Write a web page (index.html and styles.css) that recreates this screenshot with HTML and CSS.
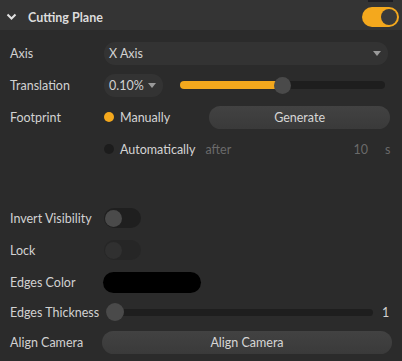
FILE: index.html
```html
<!DOCTYPE html>
<html lang="en">
  <head>
    <meta charset="UTF-8" />
    <meta name="viewport" content="width=device-width, initial-scale=1.0" />
    <title>Cutting Plane</title>
    <link rel="stylesheet" href="styles.css">
  </head>
  <body>
    <div class="panel">
      <div class="panel-header">
        <svg class="chevron" width="11" height="8" viewBox="0 0 11 8">
          <polyline points="1.5,1.5 5.5,5.5 9.5,1.5" fill="none" stroke="#e2e2e2" stroke-width="2" />
        </svg>
        <span class="panel-title">Cutting Plane</span>
        <span class="toggle toggle-on"><span class="knob"></span></span>
      </div>

      <div class="panel-body">
        <div class="row">
          <span class="label">Axis</span>
          <div class="select select-wide">
            <span>X Axis</span>
            <span class="caret"></span>
          </div>
        </div>

        <div class="row">
          <span class="label">Translation</span>
          <div class="select select-small">
            <span>0.10%</span>
            <span class="caret"></span>
          </div>
          <div class="slider slider-translation">
            <div class="fill" style="width: 50%"></div>
            <span class="thumb"></span>
          </div>
        </div>

        <div class="row">
          <span class="label">Footprint</span>
          <span class="radio radio-on"></span>
          <span class="radio-text">Manually</span>
          <button class="btn btn-generate">Generate</button>
        </div>

        <div class="row">
          <span class="label"></span>
          <span class="radio"></span>
          <span class="radio-text">Automatically</span>
          <span class="muted after">after</span>
          <span class="muted seconds">10</span>
          <span class="muted unit">s</span>
        </div>

        <div class="spacer"></div>

        <div class="row">
          <span class="label">Invert Visibility</span>
          <span class="toggle"><span class="knob"></span></span>
        </div>

        <div class="row">
          <span class="label">Lock</span>
          <span class="toggle toggle-disabled"><span class="knob"></span></span>
        </div>

        <div class="row">
          <span class="label">Edges Color</span>
          <span class="swatch"></span>
        </div>

        <div class="row row-short">
          <span class="label">Edges Thickness</span>
          <div class="slider slider-thickness">
            <span class="thumb"></span>
          </div>
          <span class="value">1</span>
        </div>

        <div class="row">
          <span class="label">Align Camera</span>
          <button class="btn btn-align">Align Camera</button>
        </div>
      </div>
    </div>
  </body>
</html>
```

FILE: styles.css
```css
body {
  margin: 0;
  background-color: #2b2b2b;
  font-family: Lato, "Open Sans", sans-serif;
  font-size: 12.5px;
  color: #d2d2d2;
}

.panel {
  width: 402px;
  height: 361px;
  overflow: hidden;
}

.panel-header {
  position: relative;
  display: flex;
  align-items: center;
  height: 30px;
  padding: 4px 3px 0 6px;
  box-sizing: border-box;
  background-color: #343434;
}

/* bit of the panel above peeking in */
.panel-header::before {
  content: '';
  position: absolute;
  top: 0;
  right: 9px;
  width: 25px;
  height: 2px;
  background-color: #1d1d22;
}

.chevron {
  margin-right: 11px;
}

.panel-title {
  flex: 1;
  font-weight: 700;
  font-size: 12.5px;
  color: #dcdcdc;
}

.panel-body {
  padding: 7px 12px 0 10px;
}

.row {
  display: flex;
  align-items: center;
  height: 32px;
}

.row-short {
  height: 28px;
}

.label {
  width: 94px;
  flex-shrink: 0;
}

.select {
  display: flex;
  align-items: center;
  justify-content: space-between;
  height: 23px;
  padding: 0 7px 0 5px;
  box-sizing: border-box;
  border-radius: 11px;
  background-color: #333333;
}

.select-wide {
  flex: 1;
  margin-right: 2px;
}

.select-small {
  width: 59px;
}

.caret {
  width: 0;
  height: 0;
  border-left: 4px solid transparent;
  border-right: 4px solid transparent;
  border-top: 5px solid #9a9a9a;
}

.slider {
  position: relative;
  height: 8px;
  border-radius: 4px;
  background-color: #1e1e1e;
}

.slider-translation {
  flex: 1;
  margin: 0 5px 0 17px;
}

.slider .fill {
  height: 100%;
  border-radius: 4px 0 0 4px;
  background-color: #f4a81d;
}

.thumb {
  position: absolute;
  top: 50%;
  width: 17px;
  height: 17px;
  margin-top: -8.5px;
  border-radius: 50%;
  background-color: #4a4a4a;
}

.slider-translation .thumb {
  left: 50%;
  margin-left: -8.5px;
}

.slider-thickness {
  flex: 1;
  height: 7px;
  margin: 0 9px 0 2px;
}

.slider-thickness .thumb {
  left: 0;
  width: 18px;
  height: 18px;
  margin-top: -9px;
}

.value {
  width: 8px;
}

.radio {
  width: 10px;
  height: 10px;
  border-radius: 50%;
  background-color: #1c1c1c;
  margin-right: 6px;
}

.radio-on {
  background-color: #f4a81d;
}

.radio-text {
  color: #d4d4d4;
}

.btn {
  height: 23px;
  border: none;
  border-radius: 12px;
  background: linear-gradient(#424242, #3a3a3a);
  color: #d6d6d6;
  font-family: inherit;
  font-size: 12.5px;
  padding: 0;
}

.btn-generate {
  flex: 1;
  margin-left: 39px;
}

.btn-align {
  flex: 1;
  margin: 0 -2px 0 -2px;
}

.muted {
  color: #6a6a6a;
}

.after {
  flex: 1;
  margin-left: 10px;
}

.seconds {
  margin-right: 17px;
}

.unit {
  width: 5px;
}

.spacer {
  height: 37px;
}

.toggle {
  position: relative;
  display: inline-block;
  width: 37px;
  height: 20px;
  border-radius: 10px;
  background-color: #1f1f1f;
}

.toggle .knob {
  position: absolute;
  top: 1.5px;
  left: 1px;
  width: 17px;
  height: 17px;
  border-radius: 50%;
  background-color: #4a4a4a;
}

.toggle-on {
  background-color: #f4a81d;
}

.toggle-on .knob {
  left: auto;
  right: 2px;
  top: 2px;
  width: 16px;
  height: 16px;
  background-color: #3a3a3a;
}

.toggle-disabled {
  background-color: #262626;
}

.toggle-disabled .knob {
  background-color: #303030;
}

.swatch {
  width: 98px;
  height: 21px;
  border-radius: 11px;
  background-color: #000;
  margin-left: -1px;
}
```
